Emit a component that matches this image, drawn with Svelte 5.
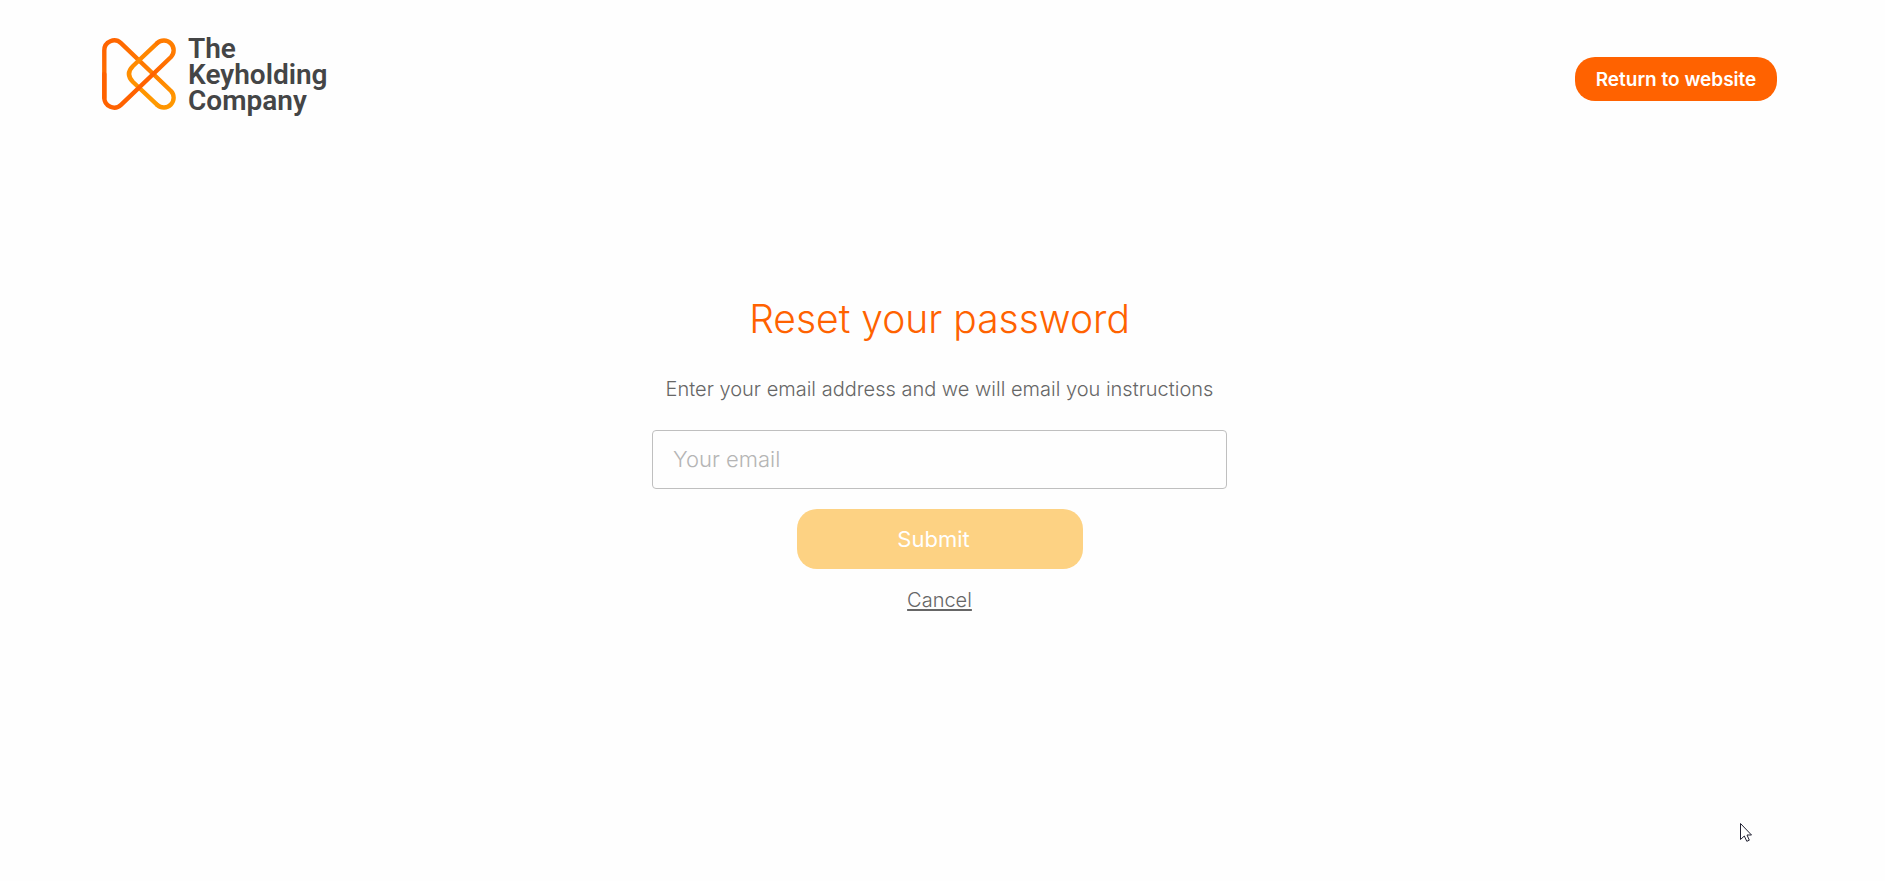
<script lang="ts">
  let email: string = '';

  function submitReset() {
    console.log('Reset requested for', email);
  }
</script>

<div class="page">
  <header class="header">
    <a class="logo" href="/" aria-label="The Keyholding Company">
      <svg class="logo-mark" viewBox="6 8 74 72" fill="none" stroke-width="4.4" stroke-linecap="round" stroke-linejoin="round">
        <defs>
          <linearGradient id="amber" x1="0" y1="0" x2="0" y2="1">
            <stop offset="0" stop-color="#ff8200" />
            <stop offset="1" stop-color="#ff9a00" />
          </linearGradient>
          <linearGradient id="fall" gradientUnits="userSpaceOnUse" x1="8" y1="10" x2="78" y2="78">
            <stop offset="0" stop-color="#ff6200" />
            <stop offset="0.4" stop-color="#ff7500" />
            <stop offset="1" stop-color="#ff9a00" />
          </linearGradient>
          <linearGradient id="rise" gradientUnits="userSpaceOnUse" x1="8" y1="78" x2="78" y2="10">
            <stop offset="0" stop-color="#ff6200" />
            <stop offset="0.6" stop-color="#ff6200" />
            <stop offset="1" stop-color="#ff8200" />
          </linearGradient>
        </defs>
        <path stroke="url(#fall)" d="M8.3 67.8V20.2A9.9 9.9 0 0 1 25 13.1L75 61A9.8 9.8 0 0 1 61.2 74.9" />
        <path stroke="url(#amber)" d="M61.2 74.9L37 52Q29 44 37 36L61.2 13.1" />
        <path stroke="url(#rise)" d="M61.2 13.1A9.8 9.8 0 0 1 75 27L25 74.9A9.9 9.9 0 0 1 8.3 67.8V44" />
      </svg>
      <span class="logo-text">The<br />Keyholding<br />Company</span>
    </a>
    <button class="return-btn" type="button">Return to website</button>
  </header>

  <main>
    <form class="reset-form" on:submit|preventDefault={submitReset}>
      <h1>Reset your password</h1>
      <label for="email">Enter your email address and we will email you instructions</label>
      <input id="email" type="email" bind:value={email} placeholder="Your email" />
      <button class="submit-btn" type="submit" disabled={!email}>Submit</button>
      <a class="cancel" href="/login">Cancel</a>
    </form>
  </main>

  <svg class="cursor" viewBox="0 0 12 19" aria-hidden="true">
    <path d="M0.5 0.5V16.5L4.3 13L6.8 18.3L9.3 17.2L7 12H11.5Z" fill="#fff" stroke="#223" stroke-width="1" />
  </svg>
</div>

<style>
  :global(body) {
    margin: 0;
    background-color: #fefefe;
  }

  .page {
    padding: 36px 108px 36px 102px;
    font-family: Inter, 'Liberation Sans', sans-serif;
    color: #666;
  }

  .header {
    display: flex;
    justify-content: space-between;
    align-items: center;
    min-height: 86px;
  }

  .logo {
    display: flex;
    align-self: flex-start;
    gap: 12px;
    color: #444546;
    text-decoration: none;
  }

  .logo-mark {
    width: 74px;
    height: 72px;
    margin-top: 2px;
  }

  .logo-text {
    font-family: Roboto, sans-serif;
    font-size: 28px;
    font-weight: 600;
    line-height: 26px;
  }

  .return-btn {
    width: 202px;
    height: 44px;
    padding: 0;
    border: none;
    border-radius: 20px;
    background-color: #ff6200;
    color: white;
    font-family: inherit;
    font-size: 19px;
    font-weight: 600;
    cursor: pointer;
  }

  .reset-form {
    display: flex;
    flex-direction: column;
    align-items: center;
    max-width: 575px;
    margin: 0 auto;
    padding-top: 171px;
  }

  h1 {
    margin: 0;
    color: #ff6200;
    font-size: 39px;
    font-weight: 300;
    line-height: 52px;
  }

  label {
    margin: 30px 0 27px;
    font-size: 20px;
    font-weight: 300;
    line-height: 28px;
  }

  input {
    width: 100%;
    height: 59px;
    padding: 0 20px 2px;
    box-sizing: border-box;
    border: 1px solid #bfbfbf;
    border-radius: 4px;
    background-color: transparent;
    color: #666;
    font-family: inherit;
    font-size: 22px;
    font-weight: 300;
  }

  input::placeholder {
    color: #b5b5b5;
  }

  .submit-btn {
    width: 286px;
    height: 60px;
    margin: 20px 0 16px;
    padding: 0 12px 0 0;
    border: none;
    border-radius: 20px;
    background-color: #ffa500;
    color: white;
    font-family: inherit;
    font-size: 22px;
    cursor: pointer;
  }

  .submit-btn:disabled {
    background-color: #fdd283;
    cursor: default;
  }

  .cancel {
    color: #666;
    font-size: 20px;
    font-weight: 300;
    line-height: 30px;
    text-decoration-thickness: 2px;
    text-underline-offset: 2px;
  }

  .cursor {
    position: absolute;
    left: 1740px;
    top: 823px;
    width: 12px;
    height: 19px;
  }
</style>
